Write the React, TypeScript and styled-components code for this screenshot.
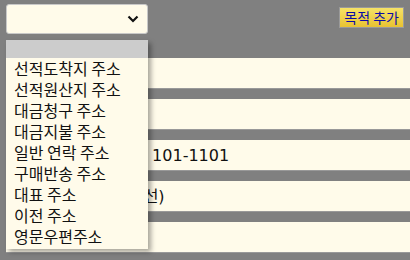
import React from 'react';
import styled, { createGlobalStyle } from 'styled-components';

const GlobalStyle = createGlobalStyle`
  html, body {
    margin: 0;
    padding: 0;
    background: #808080;
    overflow: hidden;
  }
`;

const Page = styled.div`
  position: relative;
  width: 410px;
  height: 260px;
  padding: 4px 0 0 6px;
  box-sizing: border-box;
  background: #808080;
  font-family: "DejaVu Sans", "Noto Sans CJK KR", sans-serif;
`;

const TopBar = styled.div`
  display: flex;
  justify-content: space-between;
  align-items: flex-start;
  padding-right: 6px;
`;

const SelectBox = styled.div`
  width: 142px;
  height: 30px;
  box-sizing: border-box;
  background: #fffbea;
  border: 1px solid #c8c8c8;
  border-radius: 3px;
  display: flex;
  align-items: center;
  justify-content: flex-end;
  padding-right: 8px;
`;

const AddButton = styled.button`
  margin-top: 3px;
  height: 21px;
  padding: 0 4px;
  border: 1px solid #9a9a9a;
  background: linear-gradient(#f6e266, #e8c232);
  color: #0a0aa8;
  font-family: "Noto Sans CJK KR", sans-serif;
  font-size: 14px;
  font-weight: 400;
  line-height: 19px;
`;

const Fields = styled.div`
  display: flex;
  flex-direction: column;
  gap: 10px;
  margin-top: 24px;
`;

const Field = styled.div`
  height: 31px;
  width: 420px;
  box-sizing: border-box;
  background: #fffbea;
  border-bottom: 1px solid #999;
  padding-left: 8px;
  font-size: 16px;
  line-height: 31px;
  color: #111;
  white-space: nowrap;
  overflow: hidden;
`;

const Menu = styled.ul`
  position: absolute;
  left: 6px;
  top: 40px;
  width: 142px;
  margin: 0;
  padding: 0 0 2px;
  list-style: none;
  background: #fffbea;
  box-shadow: 3px 3px 5px rgba(0, 0, 0, 0.35);
  font-family: "Noto Sans CJK KR", sans-serif;
  font-size: 16px;
  color: #111;
`;

const MenuItem = styled.li<{ $active?: boolean }>`
  height: ${p => (p.$active ? '18px' : '21px')};
  line-height: 21px;
  padding-left: 8px;
  background: ${p => (p.$active ? '#cccccc' : 'transparent')};
  white-space: nowrap;
`;

const options = [
  '선적도착지 주소',
  '선적원산지 주소',
  '대금청구 주소',
  '대금지불 주소',
  '일반 연락 주소',
  '구매반송 주소',
  '대표 주소',
  '이전 주소',
  '영문우편주소',
];

const fields = [
  '',
  '',
  '서울 강남구 역삼로, 101-1101',
  '서울시 역삼동 (2호선)',
  '',
];

export default function App() {
  return (
    <>
      <GlobalStyle />
      <Page>
        <TopBar>
          <SelectBox>
            <svg width="12" height="8" viewBox="0 0 12 8">
              <path d="M1.5 1.5 L6 6 L10.5 1.5" fill="none" stroke="#111" strokeWidth="2.2" />
            </svg>
          </SelectBox>
          <AddButton>목적 추가</AddButton>
        </TopBar>
        <Fields>
          {fields.map((f, i) => (
            <Field key={i}>{f}</Field>
          ))}
        </Fields>
        <Menu>
          <MenuItem $active />
          {options.map(o => (
            <MenuItem key={o}>{o}</MenuItem>
          ))}
        </Menu>
      </Page>
    </>
  );
}
